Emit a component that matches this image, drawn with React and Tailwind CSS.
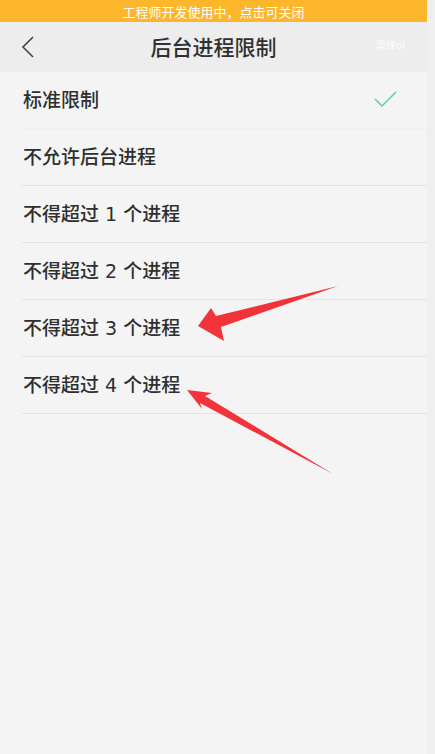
import React from 'react';

const options = [
  { label: '标准限制', checked: true, faint: true },
  { label: '不允许后台进程' },
  { label: '不得超过 1 个进程' },
  { label: '不得超过 2 个进程' },
  { label: '不得超过 3 个进程' },
  { label: '不得超过 4 个进程' },
];

const App = () => {
  return (
    <div
      className="relative flex h-[754px] w-[435px] overflow-hidden bg-[#efefef]"
      style={{ fontFamily: '"Noto Sans CJK SC", "Noto Sans", sans-serif' }}
    >
      <div className="flex w-[427px] flex-col">
        {/* dev banner */}
        <div className="flex h-[22px] items-center justify-center bg-[#fcb62b] text-[13px] leading-none text-white">
          工程师开发使用中，点击可关闭
        </div>

        {/* header */}
        <div className="relative flex h-[50px] items-center justify-center bg-[#ededed]">
          <svg className="absolute left-[20px] top-[13px]" width="16" height="24" viewBox="0 0 16 24">
            <polyline points="13,2 3,12 13,22" fill="none" stroke="#444" strokeWidth="1.6" />
          </svg>
          <h1 className="text-[21px] font-medium text-[#303030]">后台进程限制</h1>
          <span className="absolute right-[22px] top-[18px] text-[10px] leading-none text-white opacity-90">
            雷锋ol
          </span>
        </div>

        {/* list */}
        <div className="flex-1 bg-[#f4f4f4]">
          {options.map((o) => (
            <div key={o.label} className="pl-[22px]">
              <div
                className={`flex h-[57px] items-center justify-between border-b pr-[29px] ${
                  o.faint ? 'border-[#efefef]' : 'border-[#e3e3e3]'
                }`}
              >
                <span
                  className="pl-[1px] text-[19px] font-medium text-[#2f2f2f]"
                  style={{ fontFamily: '"DejaVu Sans", "Noto Sans CJK SC", sans-serif' }}
                >
                  {o.label}
                </span>
                {o.checked && (
                  <svg width="24" height="18" viewBox="0 0 24 18">
                    <polyline points="1,8 8,15 22,1" fill="none" stroke="#66c9b8" strokeWidth="1.5" />
                  </svg>
                )}
              </div>
            </div>
          ))}
        </div>
      </div>

      {/* red annotation arrows */}
      <svg className="pointer-events-none absolute left-0 top-0" width="435" height="754" viewBox="0 0 435 754">
        <polygon
          points="198,326 211,308 216,316 338,286 221,327 224,341"
          fill="#f2333a"
        />
        <polygon
          points="187,390 212,393 205,396 333,474 200,403 202,409"
          fill="#f2333a"
        />
      </svg>
    </div>
  );
};

export default App;
